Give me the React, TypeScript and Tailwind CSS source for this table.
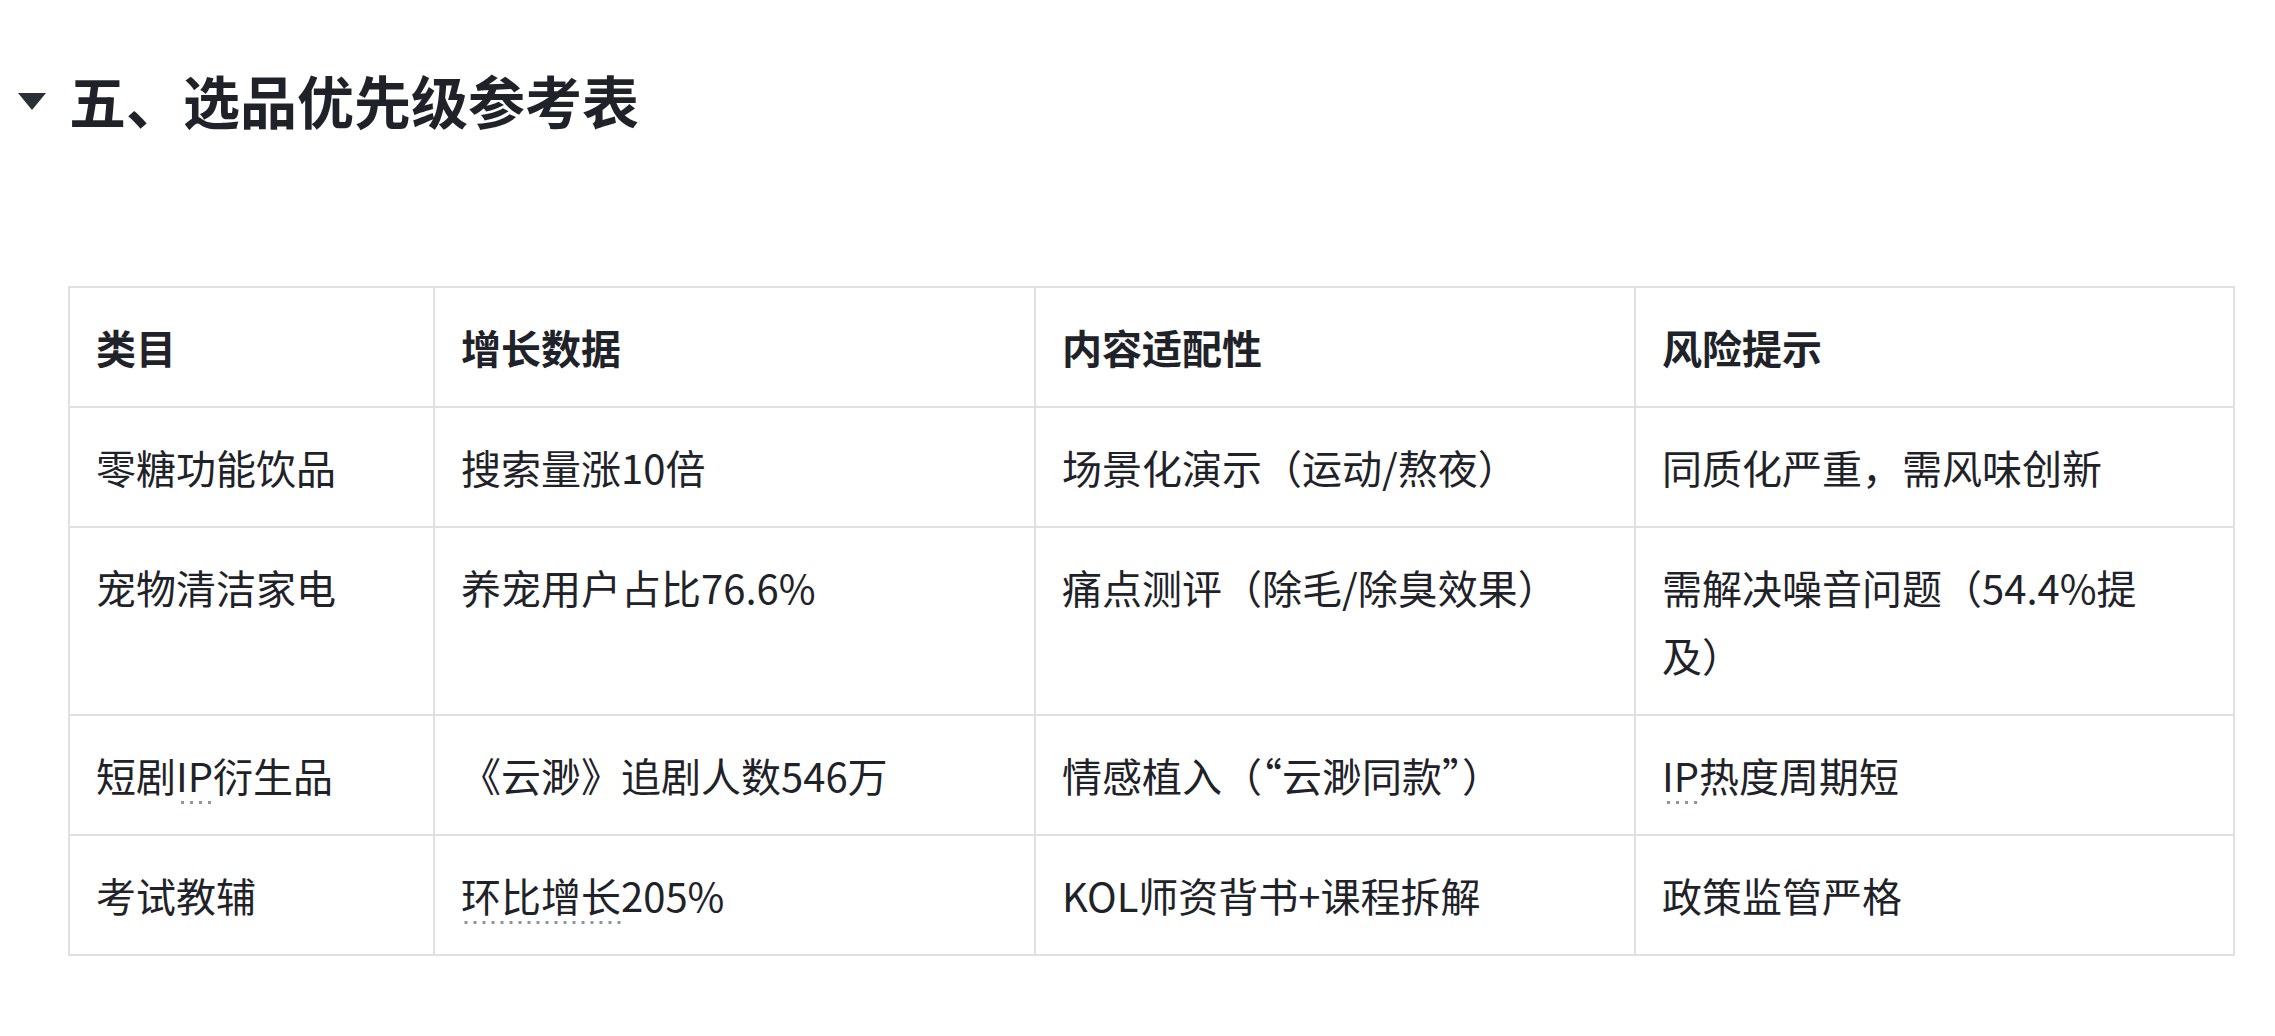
import { ReactNode } from 'react';

const Dotted = ({ children }: { children: ReactNode }) => (
  <span className="bg-[linear-gradient(to_right,#8f959e_3px,transparent_3px)] bg-[length:9px_3px] bg-bottom bg-repeat-x">
    {children}
  </span>
);

const HEAD = ['类目', '增长数据', '内容适配性', '风险提示'];

const ROWS: ReactNode[][] = [
  ['零糖功能饮品', '搜索量涨10倍', '场景化演示（运动/熬夜）', '同质化严重，需风味创新'],
  [
    '宠物清洁家电',
    '养宠用户占比76.6%',
    '痛点测评（除毛/除臭效果）',
    <>
      需解决噪音问题（54.4%提
      <br />
      及）
    </>,
  ],
  [
    <>
      短剧<Dotted>IP</Dotted>衍生品
    </>,
    '《云渺》追剧人数546万',
    '情感植入（“云渺同款”）',
    <>
      <Dotted>IP</Dotted>热度周期短
    </>,
  ],
  [
    '考试教辅',
    <>
      <Dotted>环比增长</Dotted>205%
    </>,
    'KOL师资背书+课程拆解',
    '政策监管严格',
  ],
];

export default function App() {
  return (
    <div className="min-h-screen bg-white pt-[57px] text-[#1f2329] font-['Noto_Sans_CJK_SC','Noto_Sans',sans-serif]">
      <div className="flex items-center gap-[22px] pl-[17px]">
        <svg width="30" height="19" viewBox="0 0 30 19" className="mt-[4px]">
          <path d="M1 1 H29 L15 18 Z" fill="#2b2f36" />
        </svg>
        <h2 className="text-[57px] leading-[84px] font-bold">五、选品优先级参考表</h2>
      </div>

      <table className="mt-[145px] ml-[68px] w-[2165px] table-fixed border-collapse text-[40px] leading-[68px]">
        <colgroup>
          <col className="w-[365px]" />
          <col className="w-[601px]" />
          <col className="w-[600px]" />
          <col className="w-[599px]" />
        </colgroup>
        <thead>
          <tr>
            {HEAD.map(h => (
              <th
                key={h}
                className="border-2 border-[#dee0e3] px-[26px] py-[25px] text-left align-top font-bold"
              >
                {h}
              </th>
            ))}
          </tr>
        </thead>
        <tbody>
          {ROWS.map((row, i) => (
            <tr key={i}>
              {row.map((cell, j) => (
                <td key={j} className="border-2 border-[#dee0e3] px-[26px] py-[25px] align-top">
                  {cell}
                </td>
              ))}
            </tr>
          ))}
        </tbody>
      </table>
    </div>
  );
}
